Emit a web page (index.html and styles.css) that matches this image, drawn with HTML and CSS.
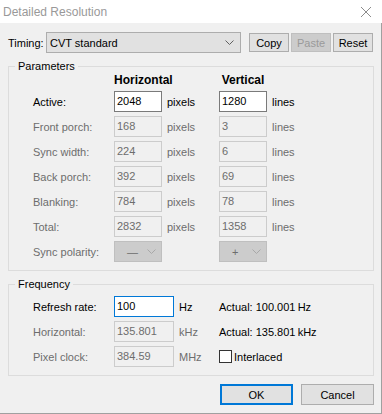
FILE: index.html
```html
<!DOCTYPE html>
<html lang="en">
<head>
  <meta charset="UTF-8">
  <meta name="viewport" content="width=device-width, initial-scale=1.0">
  <title>Detailed Resolution</title>
  <link rel="stylesheet" href="styles.css">
</head>
<body>
  <div class="dialog">
    <div class="titlebar">
      <span class="title">Detailed Resolution</span>
      <svg class="close-icon" width="12" height="12" viewBox="0 0 12 12">
        <path d="M1 1 L11 11 M11 1 L1 11" stroke="#8c8c8c" stroke-width="1" fill="none"/>
      </svg>
    </div>

    <div class="dialog-body">
      <div class="timing-row">
        <span class="timing-label">Timing:</span>
        <div class="combo timing-combo">
          <span>CVT standard</span>
          <svg class="chevron" width="9" height="5" viewBox="0 0 9 5">
            <path d="M0.5 0.5 L4.5 4.5 L8.5 0.5" stroke="#606060" fill="none"/>
          </svg>
        </div>
        <div class="btn-group">
          <button class="btn small">Copy</button>
          <button class="btn small" disabled>Paste</button>
          <button class="btn small">Reset</button>
        </div>
      </div>

      <fieldset class="group">
        <legend>Parameters</legend>
        <div class="param-grid">
          <span></span>
          <span class="col-head">Horizontal</span>
          <span></span>
          <span class="col-head">Vertical</span>
          <span></span>

          <span class="field-label">Active:</span>
          <div class="field">2048</div>
          <span class="unit">pixels</span>
          <div class="field">1280</div>
          <span class="unit">lines</span>

          <span class="field-label off">Front porch:</span>
          <div class="field off">168</div>
          <span class="unit off">pixels</span>
          <div class="field off">3</div>
          <span class="unit off">lines</span>

          <span class="field-label off">Sync width:</span>
          <div class="field off">224</div>
          <span class="unit off">pixels</span>
          <div class="field off">6</div>
          <span class="unit off">lines</span>

          <span class="field-label off">Back porch:</span>
          <div class="field off">392</div>
          <span class="unit off">pixels</span>
          <div class="field off">69</div>
          <span class="unit off">lines</span>

          <span class="field-label off">Blanking:</span>
          <div class="field off">784</div>
          <span class="unit off">pixels</span>
          <div class="field off">78</div>
          <span class="unit off">lines</span>

          <span class="field-label off">Total:</span>
          <div class="field off">2832</div>
          <span class="unit off">pixels</span>
          <div class="field off">1358</div>
          <span class="unit off">lines</span>

          <span class="field-label off">Sync polarity:</span>
          <div class="combo polarity">
            <span>&mdash;</span>
            <svg class="chevron" width="9" height="5" viewBox="0 0 9 5">
              <path d="M0.5 0.5 L4.5 4.5 L8.5 0.5" stroke="#a8a8a8" fill="none"/>
            </svg>
          </div>
          <span></span>
          <div class="combo polarity">
            <span>+</span>
            <svg class="chevron" width="9" height="5" viewBox="0 0 9 5">
              <path d="M0.5 0.5 L4.5 4.5 L8.5 0.5" stroke="#a8a8a8" fill="none"/>
            </svg>
          </div>
          <span></span>
        </div>
      </fieldset>

      <fieldset class="group freq-group">
        <legend>Frequency</legend>
        <div class="freq-grid">
          <span class="field-label">Refresh rate:</span>
          <div class="field focused">100</div>
          <span class="unit">Hz</span>
          <span class="actual">Actual: 100.001&#8201;Hz</span>

          <span class="field-label off">Horizontal:</span>
          <div class="field off">135.801</div>
          <span class="unit off">kHz</span>
          <span class="actual">Actual: 135.801&#8201;kHz</span>

          <span class="field-label off">Pixel clock:</span>
          <div class="field off">384.59</div>
          <span class="unit off">MHz</span>
          <label class="check">
            <span class="check-box"></span>
            Interlaced
          </label>
        </div>
      </fieldset>

      <div class="actions">
        <button class="btn wide default">OK</button>
        <button class="btn wide">Cancel</button>
      </div>
    </div>
  </div>
</body>
</html>
```

FILE: styles.css
```css
/* Base */
body {
  margin: 0;
  font-family: "Liberation Sans", Arial, sans-serif;
  font-size: 11px;
  color: #000;
  background: #f0f0f0;
}

.dialog {
  width: 382px;
  height: 414px;
  box-sizing: border-box;
  background: #f0f0f0;
  border-bottom: 1px solid #a0a0a0;
  display: flex;
  flex-direction: column;
}

/* Title bar */
.titlebar {
  height: 23px;
  background: #fff;
  display: flex;
  align-items: center;
  justify-content: space-between;
  padding: 0 10px 0 3px;
}

.title {
  font-size: 12px;
  color: #999;
}

.close-icon {
  display: block;
}

.dialog-body {
  flex: 1;
  border-right: 1px solid #a0a0a0;
  padding: 9px 7px 0 8px;
}

/* Timing row */
.timing-row {
  display: flex;
  align-items: center;
  height: 21px;
}

.timing-label {
  width: 38px;
}

.combo {
  box-sizing: border-box;
  height: 21px;
  border: 1px solid #adadad;
  background: #e1e1e1;
  display: flex;
  align-items: center;
  justify-content: space-between;
  padding: 0 6px 0 3px;
}

.timing-combo {
  width: 195px;
}

.btn-group {
  display: flex;
  gap: 2px;
  margin-left: 8px;
}

.btn {
  box-sizing: border-box;
  font-family: inherit;
  font-size: 11px;
  color: #000;
  background: #e1e1e1;
  border: 1px solid #adadad;
  padding: 0;
  margin: 0;
}

.btn.small {
  width: 40px;
  height: 19px;
}

.btn:disabled {
  background: #cccccc;
  border-color: #bfbfbf;
  color: #9a9a9a;
}

/* Group boxes */
.group {
  margin: 6px 0 0;
  padding: 0 0 8px 0;
  border: 1px solid #dcdcdc;
}

.group legend {
  padding: 0 3px;
  margin-left: 6px;
  line-height: 14px;
}

.param-grid {
  display: grid;
  margin-left: 24px;
  grid-template-columns: 81px 48px 57px 48px 1fr;
  grid-auto-rows: 21px;
  grid-template-rows: 14px;
  row-gap: 4px;
  align-items: center;
}

.col-head {
  font-weight: bold;
  font-size: 12px;
  text-align: center;
  white-space: nowrap;
  line-height: 14px;
}

.field-label {
  white-space: nowrap;
}

.off {
  color: #6d6d6d;
}

.field {
  box-sizing: border-box;
  height: 21px;
  line-height: 19px;
  padding-left: 2px;
  border: 1px solid #7a7a7a;
  background: #fff;
}

.field.off {
  border-color: #cccccc;
  background: #f0f0f0;
}

.field.focused {
  border-color: #0078d7;
}

.unit {
  padding-left: 5px;
}

.combo.polarity {
  background: #cccccc;
  border-color: #bfbfbf;
  color: #6d6d6d;
  padding: 0 5px 0 12px;
}

/* Frequency */
.freq-group {
  margin-top: 6px;
  padding-top: 5px;
}

.freq-grid {
  display: grid;
  margin-left: 24px;
  grid-template-columns: 81px 60px 45px 1fr;
  grid-auto-rows: 21px;
  row-gap: 4px;
  align-items: center;
}

.actual {
  white-space: nowrap;
}

.check {
  display: flex;
  align-items: center;
  gap: 2px;
}

.check-box {
  width: 13px;
  height: 13px;
  box-sizing: border-box;
  border: 1px solid #333;
  background: #fff;
}

/* Bottom buttons */
.actions {
  display: flex;
  justify-content: flex-end;
  gap: 8px;
  margin-top: 8px;
}

.btn.wide {
  width: 73px;
  height: 21px;
}

.btn.default {
  border: 2px solid #0078d7;
}
```
